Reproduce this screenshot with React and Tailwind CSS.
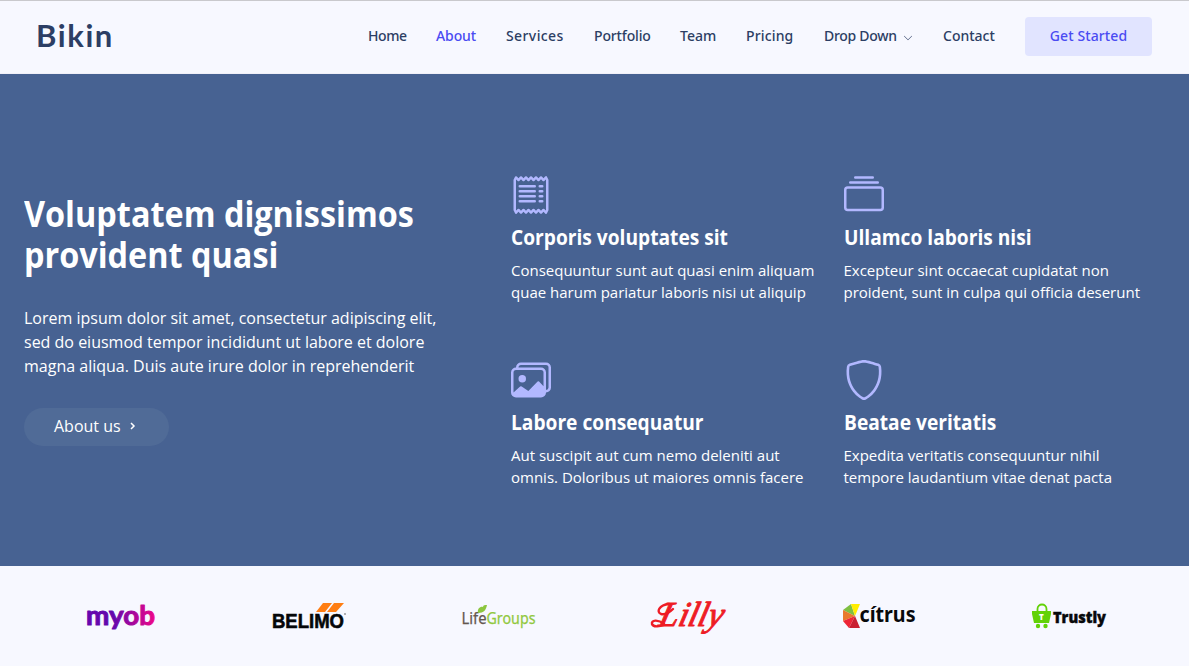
import { BsReceipt, BsCollection, BsImages, BsShield, BsChevronDown } from "react-icons/bs";

const links = [
  { label: "Home", w: "w-[38px] tracking-[-0.4px]" },
  { label: "About", w: "w-10 tracking-[-0.1px]", active: true },
  { label: "Services", w: "w-[58px] tracking-[0.4px]" },
  { label: "Portfolio", w: "w-14 tracking-[-0.15px]" },
  { label: "Team", w: "w-9" },
  { label: "Pricing", w: "w-12 tracking-[0.15px]" },
  { label: "Drop Down", w: "w-[89px] tracking-[-0.3px]", menu: true },
  { label: "Contact", w: "w-[52px]" },
];

const features = [
  { Icon: BsReceipt, title: "Corporis voluptates sit", lines: ["Consequuntur sunt aut quasi enim aliquam", "quae harum pariatur laboris nisi ut aliquip"] },
  { Icon: BsCollection, title: "Ullamco laboris nisi", lines: ["Excepteur sint occaecat cupidatat non", "proident, sunt in culpa qui officia deserunt"] },
  { Icon: BsImages, title: "Labore consequatur", lines: ["Aut suscipit aut cum nemo deleniti aut", "omnis. Doloribus ut maiores omnis facere"] },
  { Icon: BsShield, title: "Beatae veritatis", lines: ["Expedita veritatis consequuntur nihil", "tempore laudantium vitae denat pacta"] },
];

function Header() {
  return (
    <header className="flex h-[74px] items-center border-t border-b border-t-[#c9c9cd] border-b-[#f1f0f9] bg-[#f7f8ff] pl-9 text-[#2c3e64]">
      <div className="w-[332px] shrink-0 pb-1 font-['Lato',sans-serif] text-[31px] leading-9 font-bold tracking-[1.6px]">Bikin</div>
      <nav className="flex gap-[30px] pb-0.5 font-['Noto_Sans',sans-serif] text-[14px] leading-5 font-medium whitespace-nowrap">
        {links.map((l) => (
          <a key={l.label} className={`flex items-center gap-1.5 ${l.w} ${l.active ? "text-[#4a4bf2]" : ""}`}>
            {l.label}
            {l.menu && <BsChevronDown className="mt-1 h-2.5 w-2.5 shrink-0" />}
          </a>
        ))}
      </nav>
      <a className="mb-0.5 ml-[30px] flex h-[39px] w-[127px] items-center justify-center rounded-[4px] bg-[#e1e4ff] pb-0.5 font-['Noto_Sans',sans-serif] text-[14px] font-medium tracking-[0.1px] whitespace-nowrap text-[#4a4bf2]">Get Started</a>
    </header>
  );
}

function Feature({ Icon, title, lines }) {
  return (
    <div className="h-[185px] whitespace-nowrap">
      <Icon className="h-10 w-10 text-[#b2b8ff]" />
      <h4 className="mt-[10px] origin-left scale-x-[0.935] font-['Open_Sans',sans-serif] text-[20.5px] leading-6 font-bold">{title}</h4>
      <p className="mt-[10px] font-['Open_Sans',sans-serif] text-[15px] leading-[22px]">
        {lines[0]}<br />{lines[1]}
      </p>
    </div>
  );
}

function Logos() {
  return (
    <section className="flex h-[100px] items-center justify-between bg-[#f7f8ff] pr-[77px] pl-[80px]">
      <svg className="h-12 w-20" viewBox="0 0 80 48">
        <defs>
          <linearGradient id="myob" x1="0" x2="1">
            <stop offset="0.4" stopColor="#6507ad" />
            <stop offset="1" stopColor="#ee0788" />
          </linearGradient>
        </defs>
        <text x="6" y="33" textLength="69" lengthAdjust="spacingAndGlyphs" fill="url(#myob)" stroke="url(#myob)" strokeWidth="1" strokeLinejoin="round" fontFamily="Lato, sans-serif" fontWeight="700" fontSize="27">myob</text>
      </svg>
      <svg className="h-12 w-20" viewBox="0 0 80 48">
        <path d="M46 20 53 11H62L55 20ZM57 20 64 11H74L66 20Z" fill="#ff7e13" />
        <text x="2" y="36" textLength="72" lengthAdjust="spacingAndGlyphs" fill="#050608" stroke="#050608" strokeWidth="0.6" fontFamily="Liberation Sans, sans-serif" fontWeight="700" fontSize="20.5">BELIMO</text>
        <circle cx="75" cy="22" r="0.8" fill="#555" />
      </svg>
      <svg className="h-12 w-20 overflow-visible" viewBox="0 0 80 48">
        <text x="0.5" y="32" textLength="25" lengthAdjust="spacingAndGlyphs" fill="#65574f" stroke="#65574f" strokeWidth="0.25" fontFamily="Noto Sans, sans-serif" fontSize="16">Life</text>
        <text x="25.5" y="32" textLength="49" lengthAdjust="spacingAndGlyphs" fill="#91c83e" stroke="#91c83e" strokeWidth="0.25" fontFamily="Noto Sans, sans-serif" fontSize="16">Groups</text>
        <path d="M17 21C16 16 20 14 22 15C22 13 24 13 26 13C25 18 23 21 17 21Z" fill="#8cc63f" />
      </svg>
      <svg className="h-12 w-20 overflow-visible" viewBox="0 0 80 48">
        <text x="6" y="34" textLength="64" lengthAdjust="spacingAndGlyphs" fill="#ee1c25" stroke="#ee1c25" strokeWidth="1" strokeLinejoin="round" fontFamily="Liberation Serif, serif" fontStyle="italic" fontSize="35" transform="translate(9 0) skewX(-14)">Lilly</text>
        <path d="M18 12C8 13 5 20 10 22C14 23 18 21 22 17" fill="none" stroke="#ee1c25" strokeWidth="2.4" strokeLinecap="round" />
        <path d="M13 32C7 27 0 28 1 32C2 35 8 35 13 33" fill="none" stroke="#ee1c25" strokeWidth="2.4" strokeLinecap="round" />
      </svg>
      <svg className="h-12 w-20" viewBox="0 0 80 48">
        <path d="M9 12 13 24 1 18Z" fill="#7fbf42" />
        <path d="M9 12H18L13 24Z" fill="#ffed00" />
        <path d="M1 18 13 24 1 29Z" fill="#e9792b" />
        <path d="M1 29 13 24 7 36Z" fill="#ee2536" />
        <path d="M13 24 18 36H7Z" fill="#c91f31" />
        <text x="17.5" y="30" textLength="56" lengthAdjust="spacingAndGlyphs" fill="#08090b" fontFamily="Noto Sans, sans-serif" fontWeight="700" fontSize="21">cítrus</text>
      </svg>
      <svg className="h-12 w-20 overflow-visible" viewBox="0 0 80 48">
        <path d="M5.5 20V17C5.5 11 14.5 11 14.5 17V20" fill="none" stroke="#62d208" strokeWidth="1.8" />
        <path d="M0 19H19V22L17 31H2L0 22Z" fill="#62d208" />
        <circle cx="6" cy="34" r="2.2" fill="#62d208" />
        <circle cx="13.5" cy="34" r="2.2" fill="#62d208" />
        <text x="7" y="28" fill="white" fontFamily="Open Sans, sans-serif" fontWeight="800" fontSize="8">T</text>
        <text x="21" y="31" textLength="53" lengthAdjust="spacingAndGlyphs" fill="#08090b" stroke="#08090b" strokeWidth="0.4" fontFamily="Open Sans, sans-serif" fontWeight="800" fontSize="15.5">Trustly</text>
      </svg>
    </section>
  );
}

export default function App() {
  return (
    <div className="h-[666px] w-[1189px] overflow-hidden">
      <Header />
      <main className="flex h-[492px] bg-[#476292] pl-6 text-white">
        <section className="w-[487px] shrink-0 pt-[119px] whitespace-nowrap">
          <h3 className="origin-left scale-x-[0.908] font-['Open_Sans',sans-serif] text-[35.7px] leading-[41px] font-bold">Voluptatem dignissimos<br />provident quasi</h3>
          <p className="mt-[31px] font-['Open_Sans',sans-serif] text-[16px] leading-6">
            Lorem ipsum dolor sit amet, consectetur adipiscing elit,<br />
            sed do eiusmod tempor incididunt ut labore et dolore<br />
            magna aliqua. Duis aute irure dolor in reprehenderit
          </p>
          <a className="mt-[30px] flex h-[38px] w-[145px] items-center rounded-full bg-[#506b97] pl-[30px] font-['Open_Sans',sans-serif] text-[16px]">
            <span className="pb-0.5">About us</span>
            <svg className="mb-0.5 ml-[9px] h-2 w-1.5" viewBox="0 0 6 8"><path d="M1 1 4 4 1 7" fill="none" stroke="white" strokeWidth="1.5" /></svg>
          </a>
        </section>
        <section className="grid grid-cols-[332.5px_330px] content-start pt-[101px]">
          {features.map((f) => <Feature key={f.title} {...f} />)}
        </section>
      </main>
      <Logos />
    </div>
  );
}
